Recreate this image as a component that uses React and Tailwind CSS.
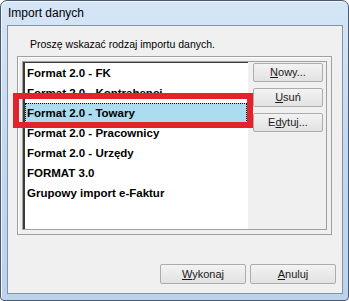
import React from "react";

const items = [
  "Format 2.0 - FK",
  "Format 2.0 - Kontrahenci",
  "Format 2.0 - Towary",
  "Format 2.0 - Pracownicy",
  "Format 2.0 - Urzędy",
  "FORMAT 3.0",
  "Grupowy import e-Faktur",
];

const font = { fontFamily: '"Liberation Sans", Arial, sans-serif' };

const WinButton = ({ className = "", children }) => (
  <button
    type="button"
    className={`flex items-center justify-center border border-[#acacac] rounded-[2px] bg-gradient-to-b from-[#f3f3f3] to-[#e2e2e2] text-[11px] text-[#1a1a1a] leading-none ${className}`}
  >
    {children}
  </button>
);

const App = () => {
  const selected = 2;
  return (
    <div className="relative w-[349px] h-[301px] overflow-hidden bg-white" style={font}>
      <div className="w-[349px] h-[301px] flex flex-col rounded-t-[7px] rounded-b-[4px] border border-[#4b5a6e] bg-gradient-to-b from-[#d6e6f7] via-[#c3d8ef] to-[#bcd3ec] pl-[6px] pr-[5px] pb-[6px] shadow-[inset_1px_1px_0_#eef5fc]">
        <div className="h-[24px] pl-[1px] text-[12px] leading-[24px] text-black">Import danych</div>

        <div className="flex-1 flex flex-col border border-[#8592a3] bg-[#f0f0f0]">
          <div className="h-[16px] mt-[10px] pl-[22px] text-[10.5px] leading-[16px] text-black">
            Proszę wskazać rodzaj importu danych.
          </div>

          <div className="mt-[4px] ml-[9px] w-[315px] h-[179px] border border-[#a0a0a0] p-[4px] shadow-[inset_1px_1px_0_#ffffff]">
            <div className="w-[305px] h-[169px] flex border border-[#a0a0a0]">
              <div className="w-[225px] h-[167px] bg-white border-t border-l-2 border-[#3c3c3c] border-r-0 border-b-0">
                {items.map((it, i) => (
                  <div
                    key={it}
                    className={`h-[20px] leading-[18px] pl-[1px] mr-[1px] text-[11.5px] font-bold text-black ${
                      i === selected ? "bg-[#acdcf0] border border-dotted border-black" : "border border-transparent"
                    }`}
                  >
                    {it}
                  </div>
                ))}
              </div>

              <div className="ml-[5px] pt-[1px] flex flex-col gap-[6px]">
                <WinButton className="w-[70px] h-[19px]">
                  <span><u>N</u>owy...</span>
                </WinButton>
                <WinButton className="w-[70px] h-[19px]">
                  <span><u>U</u>suń</span>
                </WinButton>
                <WinButton className="w-[70px] h-[19px]">
                  <span>E<u>d</u>ytuj...</span>
                </WinButton>
              </div>
            </div>
          </div>

          <div className="mt-[29px] ml-[152px] flex gap-[4px]">
            <WinButton className="w-[86px] h-[20px]">
              <span><u>W</u>ykonaj</span>
            </WinButton>
            <WinButton className="w-[86px] h-[20px]">
              <span><u>A</u>nuluj</span>
            </WinButton>
          </div>
        </div>
      </div>

      {/* red highlight annotation */}
      <div className="absolute left-[13px] top-[93px] w-[240px] h-[35px] border-[6px] border-[#e3232c]" />
    </div>
  );
};

export default App;
